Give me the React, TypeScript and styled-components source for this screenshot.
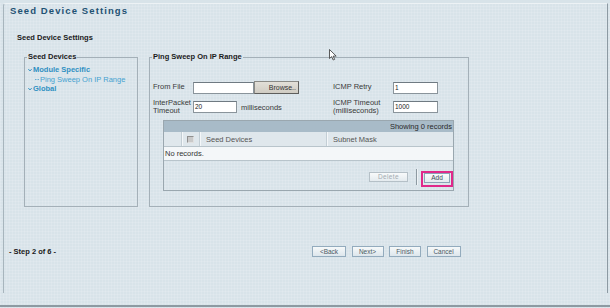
import React from "react";
import styled, { createGlobalStyle } from "styled-components";

const Global = createGlobalStyle`
  html, body { margin: 0; padding: 0; }
  body {
    width: 610px;
    height: 308px;
    overflow: hidden;
    font-family: "Liberation Sans", Arial, sans-serif;
    background: #d8e3e9;
  }
`;

const Page = styled.div`
  position: relative;
  width: 610px;
  height: 308px;
  background-color: #d8e3e9;
  background-image: linear-gradient(rgba(255, 255, 255, 0.12) 1px, transparent 1px),
    linear-gradient(90deg, rgba(255, 255, 255, 0.12) 1px, transparent 1px);
  background-size: 3px 3px;
  font-size: 7.5px;
  color: #2b2b2b;
`;

const Frame = styled.div`
  margin: 3px 2px 0 3px;
  height: 290px;
  box-sizing: border-box;
  border-left: 1px solid #a8b5bd;
  border-right: 1px solid #8d9aa3;
  border-top: 1px solid #edf2f5;
  border-top-left-radius: 3px;
  display: flex;
  flex-direction: column;
`;

const Title = styled.div`
  margin-left: 6px;
  line-height: 14px;
  font-size: 9.5px;
  font-weight: bold;
  letter-spacing: 1.1px;
  color: #1f5273;
`;

const Subtitle = styled.div`
  margin: 15px 0 0 13px;
  line-height: 10px;
  font-size: 7.5px;
  font-weight: bold;
  color: #1a1a1a;
`;

const Content = styled.div`
  display: flex;
  gap: 11px;
  margin-top: 9px;
  padding-left: 20px;
`;

const Fieldset = styled.fieldset<{ $w: number }>`
  margin: 0;
  padding: 0 3px;
  width: ${(p) => p.$w}px;
  height: 155px;
  box-sizing: border-box;
  border: 1px solid #a4b0b8;
  min-width: 0;
`;

const Legend = styled.legend`
  padding: 0 1px;
  margin-left: -1px;
  font-size: 7.5px;
  font-weight: bold;
  line-height: 10px;
  color: #1a1a1a;
`;

const Tree = styled.div`
  margin-top: 3px;
  display: flex;
  flex-direction: column;
`;

const TreeItem = styled.div<{ $level: number }>`
  display: flex;
  align-items: center;
  line-height: 9.5px;
  font-size: 7.5px;
  padding-left: ${(p) => (p.$level === 0 ? 0 : 7)}px;
  font-weight: ${(p) => (p.$level === 0 ? "bold" : "normal")};
  color: ${(p) => (p.$level === 0 ? "#2f90c2" : "#45a2d0")};
`;

const Marker = styled.span`
  display: inline-flex;
  width: 5px;
  align-items: center;
`;

const Form = styled.div`
  margin-top: 19px;
  display: grid;
  grid-template-columns: 40px 140px 60px 46px;
  grid-template-rows: 13px 17px;
  row-gap: 4.5px;
  align-items: center;
`;

const Label = styled.div`
  font-size: 7.5px;
  line-height: 8.5px;
  color: #3a3a3a;
`;

const FieldRow = styled.div`
  display: flex;
  align-items: center;
  height: 100%;
`;

const TextInput = styled.div<{ $w: number }>`
  width: ${(p) => p.$w}px;
  height: 12px;
  box-sizing: border-box;
  background: #fff;
  border: 1px solid #8a949b;
  border-top-color: #6f7a82;
  font-size: 6.5px;
  line-height: 10px;
  padding-left: 1px;
  color: #222;
`;

const BrowseButton = styled.div`
  width: 45px;
  height: 13px;
  box-sizing: border-box;
  background: linear-gradient(#e2dfd8, #d0ccc3);
  border: 1px solid #8a8a86;
  border-right-color: #5e5e5c;
  border-bottom-color: #5e5e5c;
  font-size: 7px;
  line-height: 11px;
  text-align: right;
  padding-right: 2px;
  color: #333;
`;

const Unit = styled.span`
  margin-left: 4px;
  font-size: 7.5px;
  color: #3a3a3a;
`;

const Table = styled.div`
  margin: 4.5px 0 0 10px;
  width: 291px;
  box-sizing: border-box;
  border: 1px solid #9aa7af;
  display: flex;
  flex-direction: column;
`;

const TopBar = styled.div`
  height: 11px;
  background: #a8bbc8;
  text-align: right;
  padding-right: 1px;
  font-size: 7.5px;
  line-height: 11px;
  color: #2a2a2a;
`;

const HeaderRow = styled.div`
  display: grid;
  grid-template-columns: 17px 18px 127px 1fr;
  height: 14px;
  background: #dfe7ec;
  border-bottom: 1px solid #b8c4cb;
`;

const HeadCell = styled.div<{ $first?: boolean; $pad?: number }>`
  display: flex;
  align-items: center;
  justify-content: ${(p) => (p.$pad === undefined ? "center" : "flex-start")};
  padding-left: ${(p) => p.$pad ?? 0}px;
  border-left: ${(p) => (p.$first ? "none" : "1px solid #c3ced5")};
  box-shadow: ${(p) => (p.$first ? "none" : "inset 1px 0 #f4f7f9")};
  font-size: 7.5px;
  color: #555;
`;

const Checkbox = styled.div`
  width: 7px;
  height: 7px;
  box-sizing: border-box;
  margin-left: -1px;
  background: #c9c9c9;
  border: 1px solid #8f8f8f;
  border-right-color: #e0e0e0;
  border-bottom-color: #e0e0e0;
`;

const EmptyRow = styled.div`
  height: 13px;
  background: #f4f7f9;
  border-bottom: 1px solid #b8c4cb;
  padding-left: 1px;
  font-size: 7.5px;
  line-height: 13px;
  color: #333;
`;

const Footer = styled.div`
  height: 29px;
  box-sizing: border-box;
  display: flex;
  justify-content: flex-end;
  align-items: flex-start;
  padding-top: 10px;
`;

const SmallButton = styled.div<{ $disabled?: boolean; $w: number }>`
  width: ${(p) => p.$w}px;
  height: 10px;
  box-sizing: border-box;
  border: 1px solid ${(p) => (p.$disabled ? "#b5c0c7" : "#8aa3b6")};
  background: linear-gradient(#f8fafb, #e4ebef);
  font-size: 6.5px;
  line-height: 8px;
  text-align: center;
  color: ${(p) => (p.$disabled ? "#a3abb1" : "#3d4a54")};
  letter-spacing: ${(p) => (p.$disabled ? "0.4px" : "0")};
`;

const DeleteWrap = styled.div`
  margin-top: 1px;
  margin-right: 8px;
`;

const Separator = styled.div`
  width: 1px;
  height: 16px;
  margin-top: -2px;
  margin-right: 4px;
  background: #8e9aa2;
  box-shadow: 1px 0 #eef3f6;
`;

const Highlight = styled.div`
  border: 2px solid #e0288a;
  padding: 0 1px 2px;
`;

const StepRow = styled.div`
  margin-top: 38px;
  display: grid;
  grid-template-columns: 303px auto;
  align-items: center;
  padding-left: 5px;
  height: 12px;
`;

const StepText = styled.div`
  font-size: 7.5px;
  font-weight: bold;
  color: #1a1a1a;
`;

const WizardButtons = styled.div`
  display: flex;
  gap: 5.5px;
`;

const WizardButton = styled.div<{ $w: number }>`
  width: ${(p) => p.$w}px;
  height: 11px;
  box-sizing: border-box;
  border: 1px solid #93abbd;
  background: linear-gradient(#f6f9fa, #dde6ec);
  font-size: 6.5px;
  line-height: 9px;
  text-align: center;
  color: #4b5963;
`;

const BottomLine = styled.div`
  margin-top: 12px;
  height: 2px;
  background: #8d9aa2;
`;

const Cursor = styled.svg`
  position: absolute;
  left: 329px;
  top: 46px;
`;

const Chevron = () => (
  <svg width="4" height="4" viewBox="0 0 4 4">
    <polyline points="0.3,1 2,3 3.7,1" fill="none" stroke="#2f90c2" strokeWidth="0.9" />
  </svg>
);

const Dots = () => (
  <svg width="5" height="3" viewBox="0 0 5 3">
    <rect x="0" y="1" width="1.5" height="1" fill="#6aaed2" />
    <rect x="2.5" y="1" width="1.5" height="1" fill="#6aaed2" />
  </svg>
);

export default function App() {
  return (
    <Page>
      <Global />
      <Frame>
        <Title>Seed Device Settings</Title>
        <Subtitle>Seed Device Settings</Subtitle>
        <Content>
          <Fieldset $w={114}>
            <Legend>Seed Devices</Legend>
            <Tree>
              <TreeItem $level={0}>
                <Marker>
                  <Chevron />
                </Marker>
                Module Specific
              </TreeItem>
              <TreeItem $level={1}>
                <Marker>
                  <Dots />
                </Marker>
                Ping Sweep On IP Range
              </TreeItem>
              <TreeItem $level={0}>
                <Marker>
                  <Chevron />
                </Marker>
                Global
              </TreeItem>
            </Tree>
          </Fieldset>
          <Fieldset $w={320}>
            <Legend>Ping Sweep On IP Range</Legend>
            <Form>
              <Label>From File</Label>
              <FieldRow>
                <TextInput $w={61} />
                <BrowseButton>Browse..</BrowseButton>
              </FieldRow>
              <Label>ICMP Retry</Label>
              <TextInput $w={45}>1</TextInput>

              <Label>
                InterPacket
                <br />
                Timeout
              </Label>
              <FieldRow>
                <TextInput $w={44}>20</TextInput>
                <Unit>milliseconds</Unit>
              </FieldRow>
              <Label>
                ICMP Timeout
                <br />
                (milliseconds)
              </Label>
              <TextInput $w={45}>1000</TextInput>
            </Form>
            <Table>
              <TopBar>Showing 0 records</TopBar>
              <HeaderRow>
                <HeadCell $first />
                <HeadCell>
                  <Checkbox />
                </HeadCell>
                <HeadCell $pad={6}>Seed Devices</HeadCell>
                <HeadCell $pad={6}>Subnet Mask</HeadCell>
              </HeaderRow>
              <EmptyRow>No records.</EmptyRow>
              <Footer>
                <DeleteWrap>
                  <SmallButton $disabled $w={39}>
                    Delete
                  </SmallButton>
                </DeleteWrap>
                <Separator />
                <Highlight>
                  <SmallButton $w={26}>Add</SmallButton>
                </Highlight>
              </Footer>
            </Table>
          </Fieldset>
        </Content>
        <StepRow>
          <StepText>- Step 2 of 6 -</StepText>
          <WizardButtons>
            <WizardButton $w={34}>&lt;Back</WizardButton>
            <WizardButton $w={32}>Next&gt;</WizardButton>
            <WizardButton $w={32}>Finish</WizardButton>
            <WizardButton $w={34}>Cancel</WizardButton>
          </WizardButtons>
        </StepRow>
      </Frame>
      <BottomLine />
      <Cursor width="8" height="12" viewBox="0 0 8 12">
        <path d="M0.5 0.5 L0.5 9.5 L2.7 7.6 L4.2 11 L5.6 10.4 L4.2 7.1 L7.2 7.1 Z" fill="#fff" stroke="#333" strokeWidth="0.8" />
      </Cursor>
    </Page>
  );
}
